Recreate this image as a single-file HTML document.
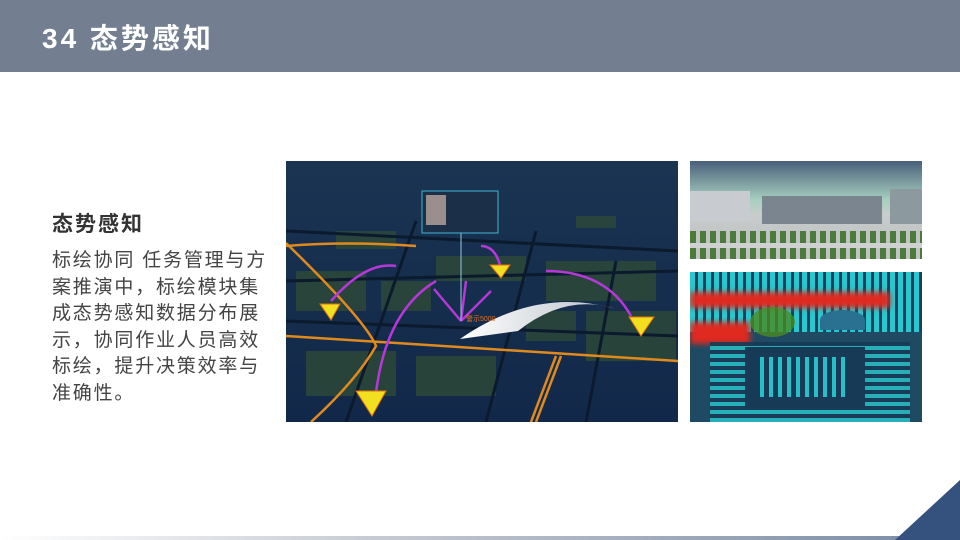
<!DOCTYPE html>
<html><head><meta charset="utf-8"><style>
*{margin:0;padding:0;box-sizing:border-box}
body{width:960px;height:540px;position:relative;background:#fff;overflow:hidden;font-family:"Liberation Sans","Noto Sans CJK SC",sans-serif}
.hdr{position:absolute;left:0;top:0;width:960px;height:72px;background:#737f91}
.hdr h1{position:absolute;left:42px;top:17px;color:#fff;font-size:28px;font-weight:bold;letter-spacing:3px}
.h2{position:absolute;left:52px;top:208px;font-size:21px;font-weight:bold;color:#333;letter-spacing:2px}
.body{position:absolute;left:52px;top:248px;font-size:19px;line-height:26.5px;color:#444;letter-spacing:1.8px;white-space:pre}
.img{position:absolute;overflow:hidden}
</style></head><body>
<div class="hdr"><h1>34 态势感知</h1></div>
<div class="h2">态势感知</div>
<div class="body">标绘协同 任务管理与方
案推演中，标绘模块集
成态势感知数据分布展
示，协同作业人员高效
标绘，提升决策效率与
准确性。</div>

<div class="img" style="left:286px;top:161px;width:392px;height:261px;background:#14294a">
<svg width="392" height="261" viewBox="0 0 392 261">
<defs><linearGradient id="sky" x1="0" y1="0" x2="0" y2="1"><stop offset="0" stop-color="#1a3452"/><stop offset="1" stop-color="#12284a"/></linearGradient>
<linearGradient id="wing" x1="0" y1="0" x2="1" y2="0"><stop offset="0" stop-color="#fff"/><stop offset="1" stop-color="#b8c0c8"/></linearGradient></defs>
<rect width="392" height="261" fill="url(#sky)"/>
<g fill="#2c4838" opacity=".85">
<rect x="50" y="70" width="60" height="18"/><rect x="150" y="95" width="90" height="25"/><rect x="260" y="100" width="110" height="40"/>
<rect x="10" y="110" width="70" height="40"/><rect x="95" y="120" width="50" height="30"/><rect x="300" y="150" width="90" height="50"/>
<rect x="20" y="190" width="90" height="45"/><rect x="130" y="195" width="80" height="40"/><rect x="290" y="55" width="40" height="12"/>
<rect x="240" y="150" width="50" height="30"/></g>
<g stroke="#0b1a2c" stroke-width="3" fill="none">
<path d="M0 70 L392 90"/><path d="M0 120 L392 110"/><path d="M0 160 L392 175"/><path d="M60 261 L130 60"/><path d="M200 261 L250 70"/><path d="M300 261 L330 100"/></g>
<g stroke="#e08a1e" stroke-width="2.5" fill="none">
<path d="M0 85 Q60 80 130 85"/><path d="M0 82 Q80 160 90 185 Q70 220 25 261"/><path d="M0 175 L392 200"/><path d="M270 195 L245 261"/><path d="M275 195 L250 261"/></g>
<g stroke="#b638d8" stroke-width="2.5" fill="none">
<path d="M45 140 Q80 100 110 105"/><path d="M90 232 Q100 150 150 120"/><path d="M175 160 L148 128"/><path d="M175 160 L180 120"/><path d="M175 160 L205 130"/><path d="M215 108 Q210 85 195 85"/><path d="M345 155 Q320 110 260 110"/></g>
<line x1="175" y1="55" x2="175" y2="160" stroke="#8ecae0" stroke-width="1"/>
<rect x="136" y="30" width="76" height="42" fill="#1b3048" stroke="#3fb5d5" stroke-width="1"/>
<rect x="140" y="34" width="20" height="30" fill="#9a8f8c"/>
<path d="M174 178 Q250 125 330 148 Q280 132 232 170 Z" fill="url(#wing)"/>
<text x="180" y="160" font-size="7" fill="#e07020" font-family="Liberation Sans,Noto Sans CJK SC,sans-serif">警示5000</text>
<g fill="#f2e020" stroke="#e07010" stroke-width="1">
<path d="M34 143 L54 143 L45 159 Z"/><path d="M204 104 L224 104 L215 117 Z"/><path d="M343 156 L368 156 L355 175 Z"/><path d="M70 230 L100 230 L86 255 Z"/></g>
</svg></div>

<div class="img" style="left:690px;top:161px;width:232px;height:98px;background:linear-gradient(#49607a 0%,#a8d0c0 40%,#c8cccc 55%,#b8bcbc 100%)">
<div style="position:absolute;left:0;top:30px;width:60px;height:30px;background:#c8cbcf"></div>
<div style="position:absolute;left:72px;top:35px;width:120px;height:28px;background:#7a8590"></div>
<div style="position:absolute;left:200px;top:28px;width:32px;height:35px;background:#8c9aa0"></div>
<div style="position:absolute;left:0;top:70px;width:232px;height:28px;background:repeating-linear-gradient(90deg,#4b7a3a 0 6px,#c0c4c4 6px 10px)"></div>
<div style="position:absolute;left:0;top:82px;width:232px;height:5px;background:#d0d2d2"></div>
</div>

<div class="img" style="left:690px;top:272px;width:232px;height:150px;background:#1e4a64">
<div style="position:absolute;left:0;top:0;width:232px;height:60px;background:repeating-linear-gradient(90deg,#28c8d0 0 5px,#1a3e5c 5px 8px)"></div>
<div style="position:absolute;left:0;top:20px;width:200px;height:16px;background:#e02a20;filter:blur(3px)"></div>
<div style="position:absolute;left:0;top:50px;width:60px;height:22px;background:#e02a20;filter:blur(3px)"></div>
<div style="position:absolute;left:60px;top:35px;width:45px;height:30px;border-radius:50%;background:#4a8a20;opacity:.8"></div>
<div style="position:absolute;left:130px;top:38px;width:45px;height:20px;border-radius:50% 50% 0 0;background:#2a7090"></div>
<div style="position:absolute;left:20px;top:70px;width:200px;height:80px;background:repeating-linear-gradient(0deg,#28c0c8 0 4px,#173a56 4px 8px),#173a56;opacity:.85"></div>
<div style="position:absolute;left:55px;top:75px;width:120px;height:60px;background:#173a56"></div>
<div style="position:absolute;left:70px;top:85px;width:90px;height:40px;background:repeating-linear-gradient(90deg,#28c0c8 0 4px,#173a56 4px 9px)"></div>
</div>

<div style="position:absolute;left:0;top:536px;width:900px;height:4px;background:linear-gradient(90deg,#fff,#c8ccd4 40%,#8090a8)"></div>
<svg style="position:absolute;left:890px;top:478px" width="70" height="62"><path d="M5 62 L70 2 L70 62 Z" fill="#35527e"/></svg>
</body></html>
